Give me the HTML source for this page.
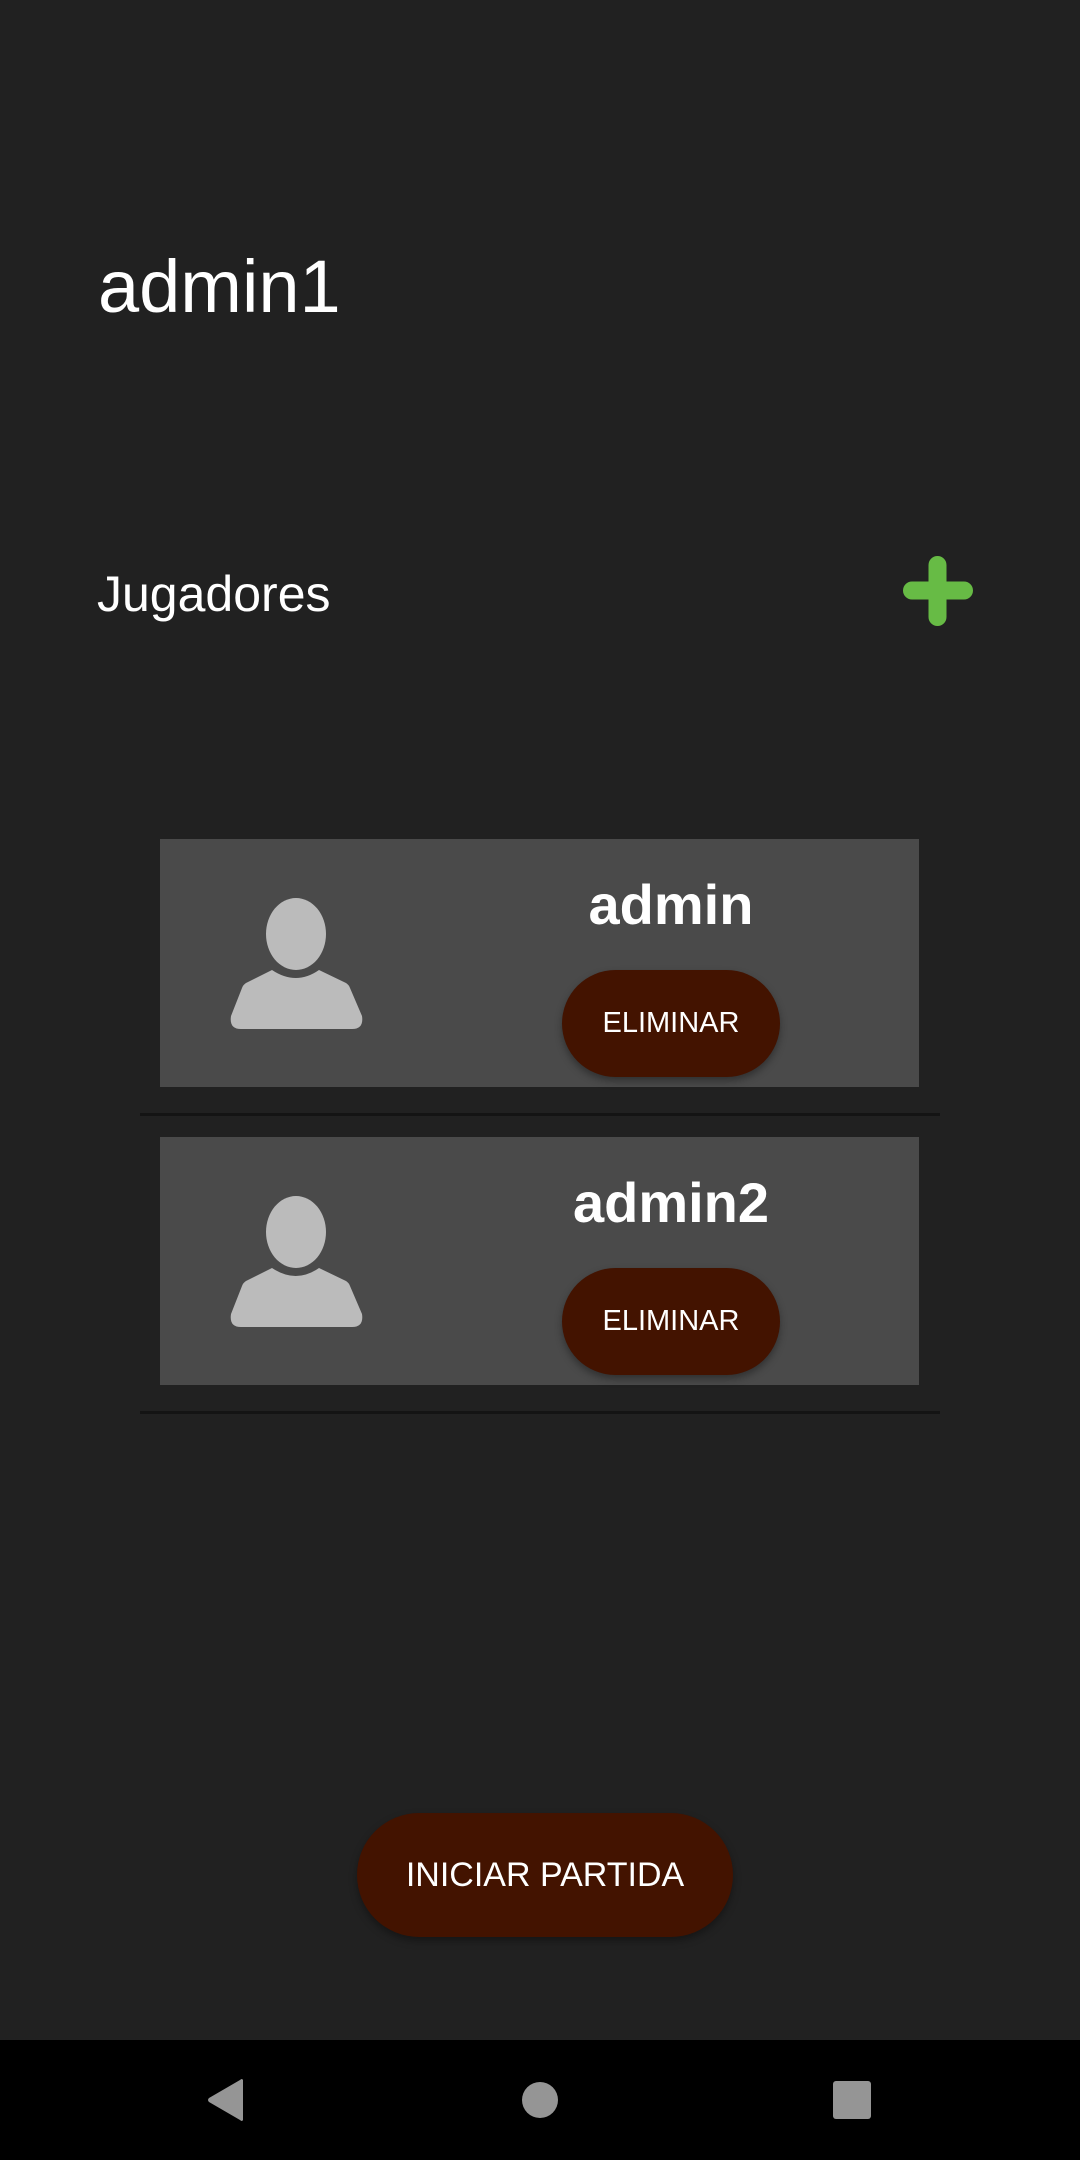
<!DOCTYPE html>
<html><head><meta charset="utf-8"><style>
*{margin:0;padding:0;box-sizing:border-box}
body{width:1080px;height:2160px;background:#212121;position:relative;overflow:hidden;font-family:"Liberation Sans",Roboto,sans-serif;color:#fff}
.abs{position:absolute}
.card{position:absolute;left:160px;width:759px;height:248px;background:#4a4a4a}
.div{position:absolute;left:140px;width:800px;height:3px;background:#141414}
.name{position:absolute;left:350px;width:642px;text-align:center;font-weight:bold;font-size:56px;line-height:1}
.btn{position:absolute;left:562px;width:218px;height:107px;border-radius:54px;background:#431300;box-shadow:0 4px 8px rgba(0,0,0,.35);display:flex;align-items:center;justify-content:center;font-size:29px;letter-spacing:0px}
</style></head><body>
<div class="abs" style="left:98px;top:242px;font-size:74px;line-height:90px">admin1</div>
<div class="abs" style="left:97px;top:565px;font-size:50px;line-height:58px">Jugadores</div>
<svg class="abs" style="left:900px;top:553px" width="76" height="76" viewBox="0 0 76 76">
<path d="M37.5 12 V64 M12 37.5 H64" stroke="#67bb45" stroke-width="18" stroke-linecap="round"/>
</svg>

<div class="card" style="top:839px"></div>
<div class="div" style="top:1113px"></div>
<div class="card" style="top:1137px"></div>
<div class="div" style="top:1411px"></div>

<svg class="abs" style="left:220px;top:880px" width="160" height="160" viewBox="220 880 160 160">
<ellipse cx="296" cy="934" rx="30" ry="36" fill="#bbbbbb"/>
<path d="M272 970 Q296 986 319 970 L346 983 Q349 985 350 988 L362 1016 Q364 1029 352 1029 L241 1029 Q229 1029 231 1016 L242 988 Q243 985 246 983 Z" fill="#bbbbbb"/>
</svg>
<svg class="abs" style="left:220px;top:1178px" width="160" height="160" viewBox="220 880 160 160">
<ellipse cx="296" cy="934" rx="30" ry="36" fill="#bbbbbb"/>
<path d="M272 970 Q296 986 319 970 L346 983 Q349 985 350 988 L362 1016 Q364 1029 352 1029 L241 1029 Q229 1029 231 1016 L242 988 Q243 985 246 983 Z" fill="#bbbbbb"/>
</svg>

<div class="name" style="top:877px">admin</div>
<div class="btn" style="top:970px">ELIMINAR</div>
<div class="name" style="top:1175px">admin2</div>
<div class="btn" style="top:1268px">ELIMINAR</div>

<div class="btn" style="left:357px;width:376px;top:1813px;height:124px;border-radius:62px;font-size:34px">INICIAR PARTIDA</div>

<div class="abs" style="left:0;top:2040px;width:1080px;height:120px;background:#000"></div>
<svg class="abs" style="left:0;top:2040px" width="1080" height="120">
<path d="M243 40 L243 80 Q242 82 240 80 L209 62 Q207 60 209 58 L240 40 Q242 38 243 40Z" fill="#959595"/>
<circle cx="540" cy="60" r="18" fill="#959595"/>
<rect x="833" y="41" width="38" height="38" rx="3" fill="#959595"/>
</svg>
</body></html>
